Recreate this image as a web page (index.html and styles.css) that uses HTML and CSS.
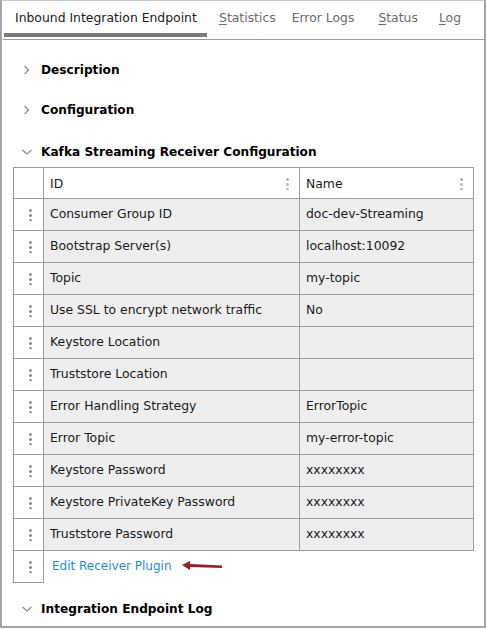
FILE: index.html
```html
<!DOCTYPE html>
<html>
<head>
<meta charset="utf-8">
<link rel="stylesheet" href="styles.css">
</head>
<body>
<div class="frame">
  <div class="tabs">
    <div class="tab active">Inbound Integration Endpoint</div>
    <div class="tab t-stat"><u>S</u>tatistics</div>
    <div class="tab t-err">Error Logs</div>
    <div class="tab t-status"><u>S</u>tatus</div>
    <div class="tab t-log"><u>L</u>og</div>
  </div>
  <div class="content">
    <div class="section s-desc">
      <svg class="chev" width="10" height="10" viewBox="0 0 10 10"><path d="M2.5 1 L6.5 5 L2.5 9" fill="none" stroke="#8a8a8a" stroke-width="1.2"/></svg>
      <span>Description</span>
    </div>
    <div class="section s-conf">
      <svg class="chev" width="10" height="10" viewBox="0 0 10 10"><path d="M2.5 1 L6.5 5 L2.5 9" fill="none" stroke="#8a8a8a" stroke-width="1.2"/></svg>
      <span>Configuration</span>
    </div>
    <div class="section s-kafka">
      <svg class="chev" width="10" height="10" viewBox="0 0 10 10"><path d="M0.5 3 L5 7 L9.5 3" fill="none" stroke="#8a8a8a" stroke-width="1.2"/></svg>
      <span>Kafka Streaming Receiver Configuration</span>
    </div>
    <table class="grid">
      <tr class="head">
        <td class="h"></td>
        <td class="c1"><div class="hc">ID<i class="dots light"></i></div></td>
        <td class="c2"><div class="hc">Name<i class="dots light"></i></div></td>
      </tr>
      <tr><td class="h"><i class="dots"></i></td><td>Consumer Group ID</td><td>doc-dev-Streaming</td></tr>
      <tr><td class="h"><i class="dots"></i></td><td>Bootstrap Server(s)</td><td>localhost:10092</td></tr>
      <tr><td class="h"><i class="dots"></i></td><td>Topic</td><td>my-topic</td></tr>
      <tr><td class="h"><i class="dots"></i></td><td>Use SSL to encrypt network traffic</td><td>No</td></tr>
      <tr><td class="h"><i class="dots"></i></td><td>Keystore Location</td><td></td></tr>
      <tr><td class="h"><i class="dots"></i></td><td>Truststore Location</td><td></td></tr>
      <tr><td class="h"><i class="dots"></i></td><td>Error Handling Strategy</td><td>ErrorTopic</td></tr>
      <tr><td class="h"><i class="dots"></i></td><td>Error Topic</td><td>my-error-topic</td></tr>
      <tr><td class="h"><i class="dots"></i></td><td>Keystore Password</td><td>xxxxxxxx</td></tr>
      <tr><td class="h"><i class="dots"></i></td><td>Keystore PrivateKey Password</td><td>xxxxxxxx</td></tr>
      <tr><td class="h"><i class="dots"></i></td><td>Truststore Password</td><td>xxxxxxxx</td></tr>
      <tr class="last">
        <td class="h"><i class="dots"></i></td>
        <td class="link" colspan="2">
          <span class="linktext">Edit Receiver Plugin</span>
          <svg class="arrow" width="44" height="12" viewBox="0 0 44 12"><path d="M2 5 L10 1 L10 4 L42 5.5 L42 8 L10 7 L10 10 Z" fill="#9b1c22"/></svg>
        </td>
      </tr>
    </table>
    <div class="section s-log">
      <svg class="chev" width="10" height="10" viewBox="0 0 10 10"><path d="M0.5 3 L5 7 L9.5 3" fill="none" stroke="#8a8a8a" stroke-width="1.2"/></svg>
      <span>Integration Endpoint Log</span>
    </div>
  </div>
</div>
</body>
</html>
```
FILE: styles.css
```css
html, body { margin: 0; padding: 0; background: #fff; }
body { font-family: "DejaVu Sans", Verdana, sans-serif; font-size: 12.4px; color: #1a1a1a; }
.frame {
  width: 486px; height: 628px; box-sizing: border-box;
  border: 2px solid #a3a3a3; border-top-color: #c8c8c8; border-top-width: 1px;
  overflow: hidden;
}
.tabs {
  display: flex; height: 38px; border-bottom: 1px solid #9a9a9a; margin-left: 1px;
  padding-left: 1px;
}
.tab { color: #6b6b6b; line-height: 34px; white-space: nowrap; }
.tab.active { color: #1a1a1a; width: 203px; box-sizing: border-box; padding-left: 11px; border-bottom: 4px solid #7b7b7b; height: 36px; }
.t-stat { margin-left: 12px; }
.t-err { margin-left: 16px; }
.t-status { margin-left: 24px; }
.t-log { margin-left: 21px; }
.tab u { text-decoration: underline; text-underline-offset: 2px; }
.content { padding: 20px 0 0 11px; }
.section { display: flex; align-items: center; height: 20px; font-weight: bold; font-size: 12.15px; color: #000; }
.section .chev { margin: 0 9px 0 9px; }
.s-conf { margin-top: 20px; }
.s-kafka { margin-top: 22px; }
.s-log { margin-top: 16px; }
.grid { border-collapse: collapse; margin-top: 5px; table-layout: fixed; width: 461px; }
.grid td { border: 1px solid #9c9c9c; height: 31px; padding: 0 0 2px 6px; background: #eeeeee; white-space: nowrap; box-sizing: border-box; }
.grid tr { height: 32px; }
.grid tr.head { height: 31px; }
.grid .head td { height: 30px; padding-bottom: 0; }
.grid td.h { width: 30px; background: #fff; padding: 0 0 0 3px; text-align: center; }
.grid td.c1 { width: 256px; }
.grid .head td { background: #fff; }
.hc { display: flex; justify-content: space-between; align-items: center; padding-right: 10px; height: 20px; }
.dots {
  display: block; margin: 0 auto; width: 3px; height: 13px;
  background: radial-gradient(circle, #8f8f8f 1.3px, transparent 1.5px) 0 0 / 3px 5px repeat-y;
}
.hc .dots { margin: 0; }
.dots.light { background-image: radial-gradient(circle, #b5b5b5 1.3px, transparent 1.5px); }
.grid .last td.link { border: none; background: #fff; padding-left: 8px; }
.linktext { color: #1e8fd3; font-size: 12px; }
.arrow { vertical-align: middle; margin-left: 5px; position: relative; top: -1px; }
```
